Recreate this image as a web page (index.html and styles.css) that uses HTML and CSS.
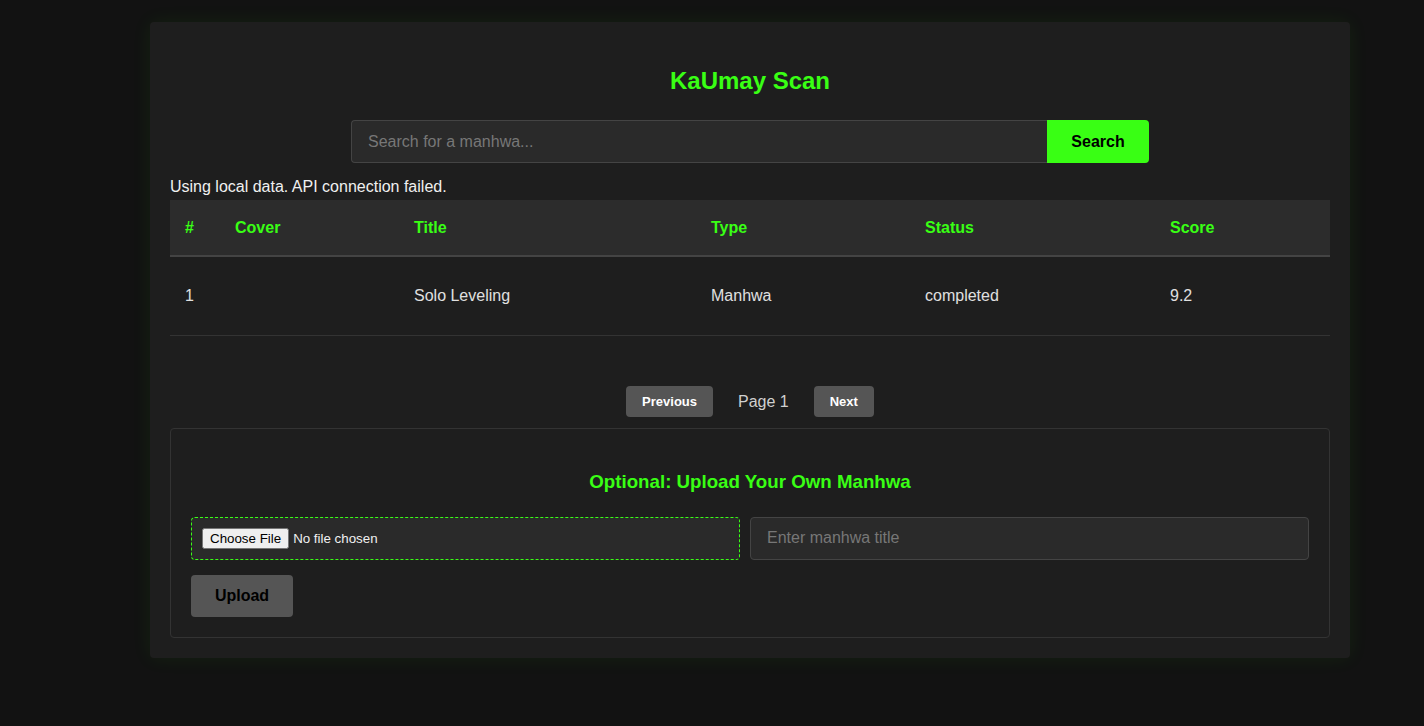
FILE: index.html
```html
<!DOCTYPE html>
<html>
<head>
<meta charset="utf-8">
<title>KaUmay Scan</title>
<link rel="stylesheet" href="styles.css">
</head>
<body>
<div class="page">
  <main class="container">
    <h1 class="title">KaUmay Scan</h1>
    <form class="search">
      <input class="search-input" type="text" placeholder="Search for a manhwa...">
      <button class="search-btn" type="button">Search</button>
    </form>
    <p class="status-msg">Using local data. API connection failed.</p>
    <table class="list">
      <thead>
        <tr>
          <th class="c-num">#</th>
          <th class="c-cover">Cover</th>
          <th class="c-title">Title</th>
          <th class="c-type">Type</th>
          <th class="c-status">Status</th>
          <th class="c-score">Score</th>
        </tr>
      </thead>
      <tbody>
        <tr>
          <td>1</td>
          <td></td>
          <td>Solo Leveling</td>
          <td>Manhwa</td>
          <td>completed</td>
          <td>9.2</td>
        </tr>
      </tbody>
    </table>
    <div class="pager">
      <button class="pager-btn" type="button">Previous</button>
      <span class="pager-label">Page 1</span>
      <button class="pager-btn" type="button">Next</button>
    </div>
    <section class="upload">
      <h3 class="upload-title">Optional: Upload Your Own Manhwa</h3>
      <div class="upload-row">
        <input class="file-input" type="file">
        <input class="title-input" type="text" placeholder="Enter manhwa title">
      </div>
      <button class="upload-btn" type="button">Upload</button>
    </section>
  </main>
</div>
</body>
</html>
```

FILE: styles.css
```css
* { box-sizing: border-box; }
html, body { margin: 0; padding: 0; }
body {
  background: #121212;
  color: #e0e0e0;
  font-family: "Liberation Sans", Arial, sans-serif;
  font-size: 16px;
  min-height: 726px;
}
.page {
  padding: 22px 74px 0 150px;
}
.container {
  width: 1200px;
  background: #1e1e1e;
  border-radius: 4px;
  padding: 20px;
  box-shadow: 0 0 20px rgba(57, 255, 20, 0.07);
}
.title {
  margin: 25px 0 25px;
  text-align: center;
  color: #39ff14;
  font-size: 24px;
  line-height: 28px;
  font-weight: bold;
}
.search {
  display: flex;
  width: 798px;
  margin: 0 auto;
}
.search-input {
  flex: 1;
  height: 43px;
  padding: 0 16px;
  background: #2a2a2a;
  border: 1px solid #444;
  border-right: none;
  border-radius: 4px 0 0 4px;
  color: #e0e0e0;
  font-family: inherit;
  font-size: 16px;
  outline: none;
}
.search-input::placeholder, .title-input::placeholder { color: #777; }
.search-btn {
  width: 102px;
  height: 43px;
  border: none;
  border-radius: 0 4px 4px 0;
  background: #39ff14;
  color: #000;
  font-family: inherit;
  font-weight: bold;
  font-size: 16px;
}
.status-msg {
  margin: 15px 0 4px;
  line-height: 18px;
  color: #f0f0f0;
}
.list {
  width: 1160px;
  border-collapse: collapse;
  table-layout: fixed;
}
.list th {
  background: #2c2c2c;
  color: #39ff14;
  text-align: left;
  font-weight: bold;
  padding: 0 15px;
  height: 56px;
  border-bottom: 2px solid #444;
}
.list td {
  padding: 0 15px;
  height: 79px;
  border-bottom: 1px solid #333;
  color: #e0e0e0;
}
.c-num { width: 50px; }
.c-cover { width: 179px; }
.c-title { width: 297px; }
.c-type { width: 214px; }
.c-status { width: 245px; }
.c-score { width: 175px; }
.pager {
  display: flex;
  justify-content: center;
  align-items: center;
  gap: 25px;
  margin: 50px 0 11px;
}
.pager-btn {
  height: 31px;
  padding: 0 16px;
  border: none;
  border-radius: 4px;
  background: #555;
  color: #fff;
  font-family: inherit;
  font-weight: bold;
  font-size: 13px;
}
.pager-label {
  color: #d0d0d0;
  font-size: 16px;
  padding-top: 2px;
}
.upload {
  border: 1px solid #333;
  border-radius: 4px;
  padding: 20px;
}
.upload-title {
  margin: 22px 0 24px;
  text-align: center;
  color: #39ff14;
  font-size: 18.72px;
  line-height: 22px;
}
.upload-row {
  display: grid;
  grid-template-columns: 549px 1fr;
  gap: 10px;
  align-items: start;
}
.file-input {
  padding: 10px 10px;
  background: #2a2a2a;
  border: 1px dashed #39ff14;
  border-radius: 4px;
  color: #f0f0f0;
  font-family: inherit;
  font-size: 13.33px;
}
.title-input {
  height: 43px;
  padding: 0 16px;
  background: #2a2a2a;
  border: 1px solid #444;
  border-radius: 4px;
  color: #e0e0e0;
  font-family: inherit;
  font-size: 16px;
  outline: none;
}
.upload-btn {
  margin-top: 15px;
  width: 102px;
  height: 42px;
  border: none;
  border-radius: 4px;
  background: #555;
  color: #000;
  font-family: inherit;
  font-weight: bold;
  font-size: 16px;
}
```
